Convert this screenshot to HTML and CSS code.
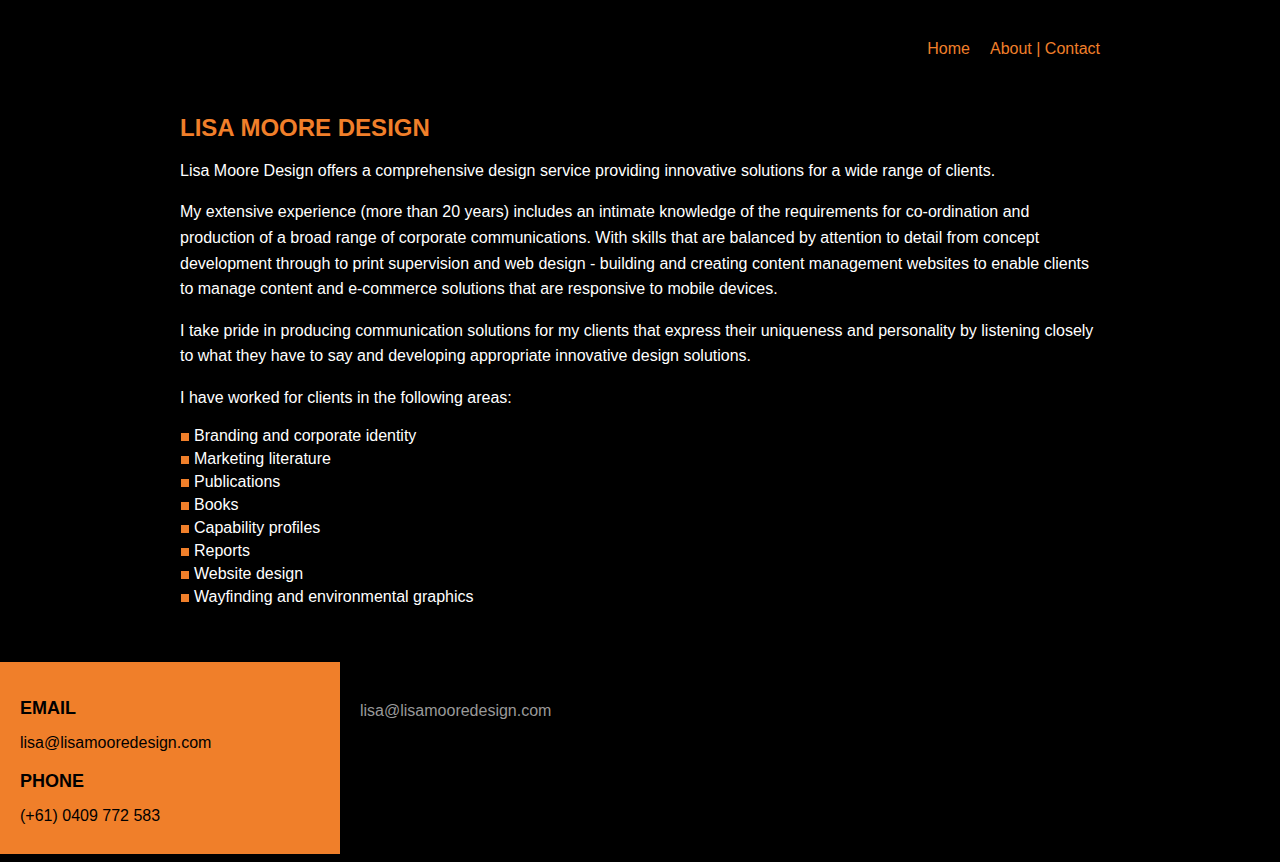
FILE: index.html
```html
<!DOCTYPE html>
<html lang="en">
<head>
<meta charset="utf-8">
<title>Lisa Moore Design</title>
<link rel="stylesheet" href="styles.css">
</head>
<body>
<header class="site-header">
  <nav class="nav">
    <a href="#" class="nav-link">Home</a>
    <a href="#" class="nav-link">About | Contact</a>
  </nav>
</header>
<main class="content">
  <h2 class="title">LISA MOORE DESIGN</h2>
  <p class="para">Lisa Moore Design offers a comprehensive design service providing innovative solutions for a wide range of clients.</p>
  <p class="para">My extensive experience (more than 20 years) includes an intimate knowledge of the requirements for co-ordination and production of a broad range of corporate communications. With skills that are balanced by attention to detail from concept development through to print supervision and web design - building and creating content management websites to enable clients to manage content and e-commerce solutions that are responsive to mobile devices.</p>
  <p class="para">I take pride in producing communication solutions for my clients that express their uniqueness and personality by listening closely to what they have to say and developing appropriate innovative design solutions.</p>
  <p class="para">I have worked for clients in the following areas:</p>
  <ul class="areas">
    <li class="area">Branding and corporate identity</li>
    <li class="area">Marketing literature</li>
    <li class="area">Publications</li>
    <li class="area">Books</li>
    <li class="area">Capability profiles</li>
    <li class="area">Reports</li>
    <li class="area">Website design</li>
    <li class="area">Wayfinding and environmental graphics</li>
  </ul>
</main>
<footer class="footer">
  <div class="contact-box">
    <h3 class="contact-label">EMAIL</h3>
    <p class="contact-value">lisa@lisamooredesign.com</p>
    <h3 class="contact-label">PHONE</h3>
    <p class="contact-value">(+61) 0409 772 583</p>
  </div>
  <div class="footer-side">
    <p class="footer-email">lisa@lisamooredesign.com</p>
  </div>
</footer>
</body>
</html>
```

FILE: styles.css
```css
html, body {
  margin: 0;
  padding: 0;
  background: #000;
}
body {
  font-family: "Liberation Sans", Arial, sans-serif;
  font-size: 16px;
  color: #fff;
  padding-bottom: 8px;
}
.site-header {
  width: 920px;
  margin: 0 auto;
  padding-top: 39px;
  display: flex;
  justify-content: flex-end;
}
.nav {
  display: flex;
  gap: 20px;
  line-height: 20px;
}
.nav-link {
  color: #f07f2a;
  text-decoration: none;
}
.content {
  width: 920px;
  margin: 0 auto;
  padding: 55px 0 54px;
}
.title {
  margin: 0 0 15px;
  font-size: 24px;
  font-weight: bold;
  line-height: 28.8px;
  color: #f07f2a;
}
.para {
  margin: 0 0 16px;
  line-height: 1.6;
}
.areas {
  list-style: none;
  margin: -3px 0 0;
  padding: 0;
  line-height: 23px;
}
.area::before {
  content: "";
  display: inline-block;
  width: 8px;
  height: 8px;
  margin: 0 5px 0 1px;
  background: #f07f2a;
}
.footer {
  display: flex;
  align-items: stretch;
}
.contact-box {
  width: 340px;
  box-sizing: border-box;
  background: #f07f2a;
  color: #000;
  padding: 36px 20px 25px;
}
.contact-label {
  margin: 16px 0 11px;
  font-size: 18px;
  font-weight: bold;
  line-height: 21px;
}
.contact-label:first-child {
  margin-top: 0;
}
.contact-value {
  margin: 0;
  line-height: 1.6;
}
.footer-side {
  padding: 36px 20px 0;
}
.footer-email {
  margin: 0;
  line-height: 1.6;
  color: #999;
}
```
